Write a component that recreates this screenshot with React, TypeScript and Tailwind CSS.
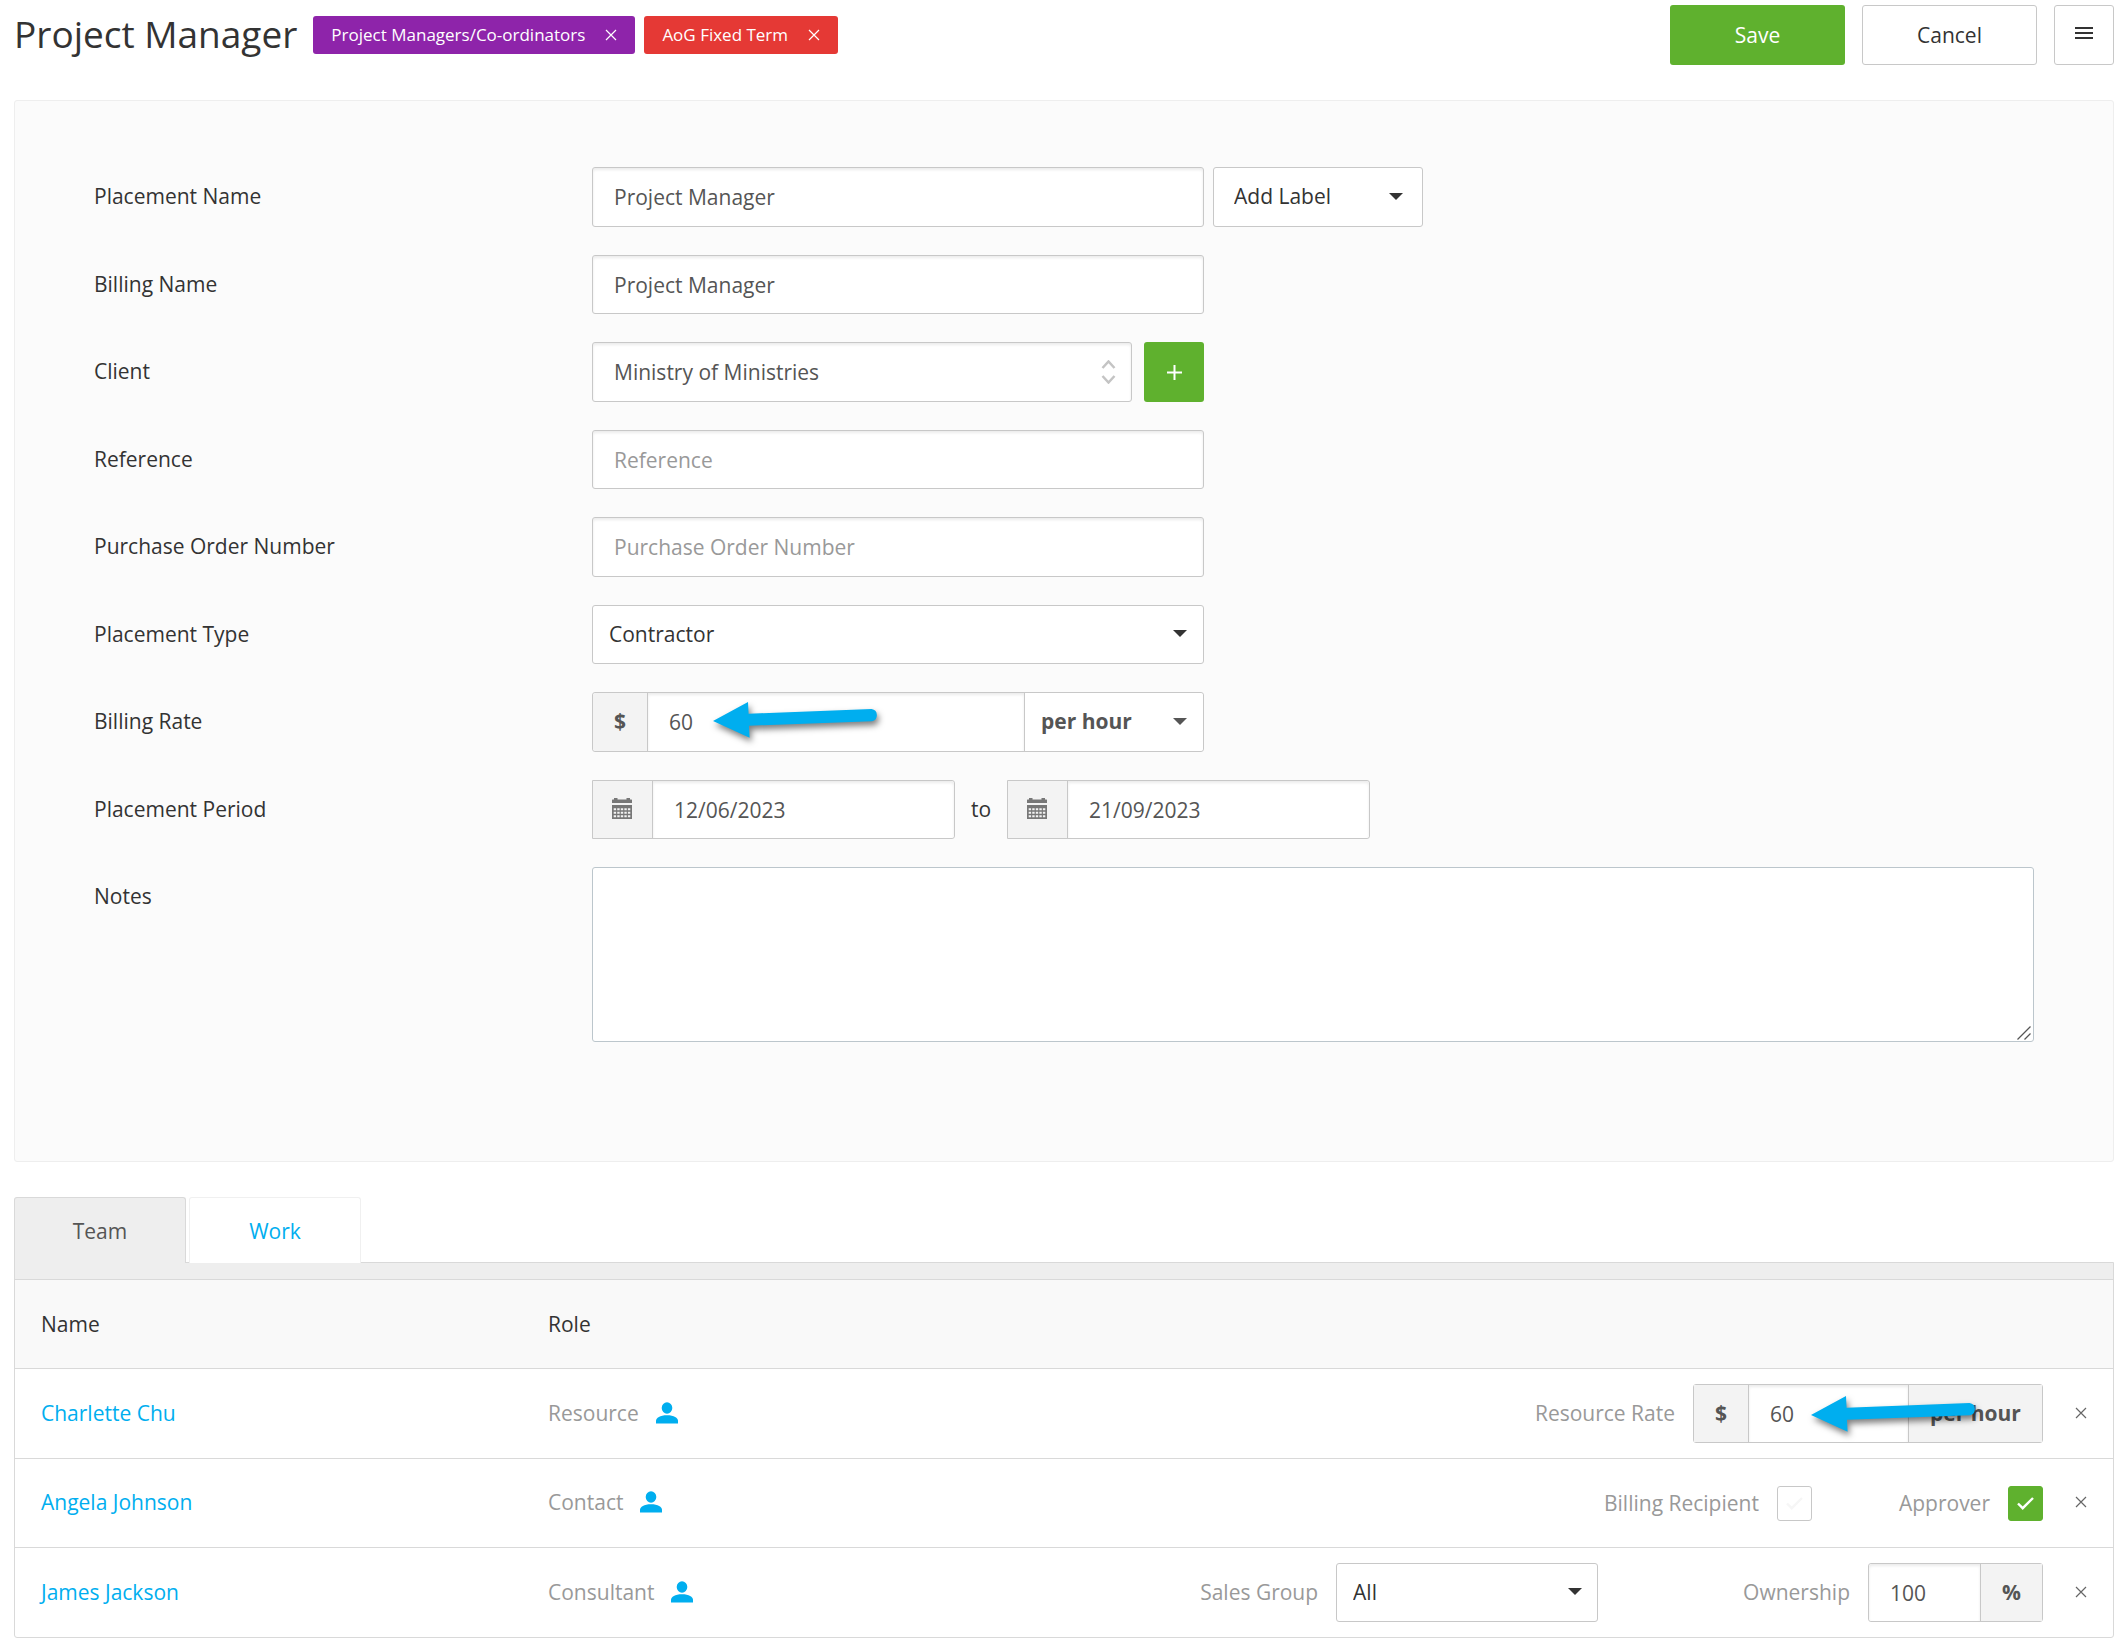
import React, { useState } from 'react'
import clsx from 'clsx'

const controlBorder = 'border border-[#c8c8c8]'
const inputShadow = 'shadow-[inset_0_2px_3px_rgba(0,0,0,0.08)]'
const inputBase = 'bg-white text-[#555] placeholder:text-[#999] outline-none'

function CloseIcon({ className }: { className?: string }) {
  return (
    <svg className={className} viewBox="0 0 12 12" fill="none" stroke="currentColor" strokeWidth="1.2" aria-hidden="true">
      <path d="M1 1l10 10M11 1L1 11" />
    </svg>
  )
}

function Caret() {
  return (
    <svg className="h-[7px] w-[14px]" viewBox="0 0 14 7" fill="currentColor" aria-hidden="true">
      <path d="M0 0h14L7 7z" />
    </svg>
  )
}

function CalendarIcon() {
  return (
    <svg className="h-[21px] w-5 text-[#777]" viewBox="0 0 20 21" fill="currentColor" aria-hidden="true">
      <path d="M2 0h3.5v1.500h9V0H18v1.500h1.500a.5.5 0 0 1 .5.5v3H0V2a.5.5 0 0 1 .5-.5H2z" />
      <path
        fillRule="evenodd"
        d="M0 7h20v14H0zM1.700 10.200v2h2.400v-2zm3.550 0v2h2.400v-2zm3.550 0v2h2.400v-2zm3.550 0v2h2.400v-2zm3.550 0v2h2.400v-2zM1.700 13.700v2h2.400v-2zm3.550 0v2h2.400v-2zm3.550 0v2h2.400v-2zm3.550 0v2h2.400v-2zm3.550 0v2h2.400v-2zM1.700 17.200v2h2.400v-2zm3.550 0v2h2.400v-2zm3.550 0v2h2.400v-2zm3.550 0v2h2.400v-2zm3.550 0v2h2.400v-2z"
      />
    </svg>
  )
}

function PersonIcon() {
  return (
    <svg className="h-[22px] w-[22px] text-[#00aeef]" viewBox="0 0 22 22" fill="currentColor" aria-hidden="true">
      <ellipse cx="11" cy="6" rx="5.300" ry="5.700" />
      <path d="M0 21.500v-2.500c0-3 4-5.700 11-5.700s11 2.700 11 5.700v2.500z" />
    </svg>
  )
}

function CheckIcon({ className }: { className?: string }) {
  return (
    <svg className={className} viewBox="0 0 17 13" fill="none" stroke="currentColor" strokeWidth="2.4" aria-hidden="true">
      <path d="M1 6.500l4.700 4.700L16 1" />
    </svg>
  )
}

// Callout pointing at the rate value
function Arrow({ className }: { className?: string }) {
  return (
    <svg
      className={clsx('pointer-events-none absolute z-10 h-[48px] w-[172px] overflow-visible', className)}
      viewBox="0 0 172 48"
      fill="#00aeef"
      aria-hidden="true"
    >
      <path
        className="drop-shadow-[2px_4px_3px_rgba(0,0,0,0.5)]"
        d="M0 21L35 2l.6 11.700L158.500 9a6.200 6.200 0 0 1 .5 12.200L36 25.700l.6 12z"
      />
    </svg>
  )
}

interface SelectProps {
  id: string
  label?: string
  options: string[]
  className?: string
  selectClassName?: string
  caretClassName?: string
}

function Select({ id, label, options, className, selectClassName, caretClassName }: SelectProps) {
  return (
    <div className={clsx('relative h-full', className)}>
      <select
        id={id}
        aria-label={label}
        className={clsx('h-full w-full appearance-none bg-white pb-0.5 outline-none', selectClassName)}
      >
        {options.map((option) => (
          <option key={option}>{option}</option>
        ))}
      </select>
      <span className={clsx('pointer-events-none absolute inset-y-0 flex items-center pb-0.5', caretClassName)}>
        <Caret />
      </span>
    </div>
  )
}

function Addon({ children, className }: { children: React.ReactNode; className?: string }) {
  return (
    <span className={clsx('flex h-full shrink-0 items-center justify-center bg-[#f3f3f3] pb-0.5 font-bold text-[#555]', className)}>
      {children}
    </span>
  )
}

function Tag({ children, className }: { children: React.ReactNode; className: string }) {
  return (
    <span
      className={clsx('flex h-[38px] items-center gap-5 rounded-[3px] px-[18px] text-[17px] font-medium text-white', className)}
    >
      {children}
      <button type="button" aria-label="Remove label">
        <CloseIcon className="h-3 w-3" />
      </button>
    </span>
  )
}

function Row({ label, htmlFor, children }: { label: string; htmlFor: string; children: React.ReactNode }) {
  return (
    <div className="flex h-[60px] items-center even:h-[59px]">
      <label htmlFor={htmlFor} className="w-[498px] shrink-0 pb-0.5 text-[#333]">
        {label}
      </label>
      {children}
    </div>
  )
}

function TextField({ id, value, placeholder }: { id: string; value?: string; placeholder?: string }) {
  return (
    <input
      id={id}
      type="text"
      defaultValue={value}
      placeholder={placeholder}
      className={clsx('h-full w-[612px] rounded-[3px] px-[21px]', controlBorder, inputShadow, inputBase)}
    />
  )
}

function DateField({ id, label, value }: { id: string; label?: string; value: string }) {
  return (
    <div className={clsx('flex h-full w-[363px] rounded-r-[3px]', controlBorder)}>
      <Addon className="w-[60px] border-r border-[#c8c8c8] pr-0.5">
        <CalendarIcon />
      </Addon>
      <input
        id={id}
        aria-label={label}
        type="text"
        defaultValue={value}
        className={clsx('min-w-0 flex-1 rounded-r-[3px] px-[21px]', inputShadow, inputBase)}
      />
    </div>
  )
}

function Checkbox({ id, label, defaultChecked }: { id: string; label: string; defaultChecked?: boolean }) {
  return (
    <div className="flex items-center gap-[18px]">
      <label htmlFor={id}>{label}</label>
      <span className="relative flex h-[35px] w-[35px] items-center justify-center">
        <input
          id={id}
          type="checkbox"
          defaultChecked={defaultChecked}
          className="peer h-full w-full appearance-none rounded-[3px] border border-[#c8c8c8] bg-white checked:border-[#5fb12e] checked:bg-[#5fb12e]"
        />
        <CheckIcon className="pointer-events-none absolute h-[13px] w-[17px] text-[#f6f6f6] peer-checked:text-white" />
      </span>
    </div>
  )
}

function TeamRow({ name, role, children }: { name: string; role: string; children: React.ReactNode }) {
  return (
    <tr className="h-[90px] even:h-[89px]">
      <td className="border-t border-[#d9d9d9] pb-0.5 pl-[26px]">
        <a href="#" className="text-[#00aeef]">
          {name}
        </a>
      </td>
      <td className="border-t border-[#d9d9d9] pb-0.5">
        <span className="flex items-center gap-[17px]">
          {role}
          <PersonIcon />
        </span>
      </td>
      <td className="border-t border-[#d9d9d9]">
        <div className="flex items-center justify-end">{children}</div>
      </td>
      <td className="border-t border-[#d9d9d9] pb-0.5 pl-8">
        <button type="button" aria-label={`Remove ${name}`} className="flex text-[#666]">
          <CloseIcon className="h-3 w-3" />
        </button>
      </td>
    </tr>
  )
}

export default function App() {
  const [tab, setTab] = useState('Team')

  return (
    <div className="bg-white px-[14px] pt-[5px] pr-[9px] pb-[7px] font-['Open_Sans',sans-serif] text-[21px] leading-7 text-[#333]">
      <header className="flex h-[60px] items-center">
        <h1 className="mr-4 pb-0.5 text-[37px] leading-[52px]">Project Manager</h1>
        <div className="flex gap-[9px]">
          <Tag className="bg-[#8e24aa]">Project Managers/Co-ordinators</Tag>
          <Tag className="bg-[#e53935]">AoG Fixed Term</Tag>
        </div>
        <div className="ml-auto flex h-full gap-[17px]">
          <button type="button" className="w-[175px] rounded-[3px] bg-[#5fb12e] text-white">
            Save
          </button>
          <button type="button" className={clsx('w-[175px] rounded-[3px] bg-white', controlBorder)}>
            Cancel
          </button>
          <button
            type="button"
            aria-label="Menu"
            className={clsx('flex w-[60px] items-center justify-center rounded-[3px] bg-white pb-1', controlBorder)}
          >
            <svg className="h-3 w-[18px]" viewBox="0 0 18 12" fill="#333" aria-hidden="true">
              <path d="M0 0h18v2H0zM0 5h18v2H0zM0 10h18v2H0z" />
            </svg>
          </button>
        </div>
      </header>

      <form className="mt-[35px] rounded-[3px] border border-[#eee] bg-[#fbfbfb] pt-[66px] pr-[79px] pb-[119px] pl-[79px]">
        <div className="flex flex-col gap-7">
          <Row label="Placement Name" htmlFor="placement-name">
            <TextField id="placement-name" value="Project Manager" />
            <Select
              id="add-label"
              label="Add Label"
              options={['Add Label']}
              className="ml-[9px] w-[210px]"
              selectClassName="rounded-[3px] border border-[#c8c8c8] pl-5"
              caretClassName="right-5"
            />
          </Row>
          <Row label="Billing Name" htmlFor="billing-name">
            <TextField id="billing-name" value="Project Manager" />
          </Row>
          <Row label="Client" htmlFor="client">
            <div className="relative h-full w-[540px]">
              <input
                id="client"
                type="text"
                role="combobox"
                aria-expanded="false"
                defaultValue="Ministry of Ministries"
                className={clsx('h-full w-full rounded-[3px] px-[21px]', controlBorder, inputShadow, inputBase)}
              />
              <span className="pointer-events-none absolute inset-y-0 right-4 flex items-center text-[#c4c4c4]">
                <svg className="h-6 w-[15px]" viewBox="0 0 15 24" fill="none" stroke="currentColor" strokeWidth="2.500" aria-hidden="true">
                  <path d="M1.500 8l6-6.500 6 6.500M1.500 16l6 6.500 6-6.500" />
                </svg>
              </span>
            </div>
            <button
              type="button"
              aria-label="Add client"
              className="ml-3 flex h-full w-[60px] items-center justify-center rounded-[3px] bg-[#5fb12e] text-white"
            >
              <svg className="h-[15px] w-[15px]" viewBox="0 0 15 15" fill="currentColor" aria-hidden="true">
                <path d="M6.500 0h2v6.500H15v2H8.500V15h-2V8.500H0v-2h6.500z" />
              </svg>
            </button>
          </Row>
          <Row label="Reference" htmlFor="reference">
            <TextField id="reference" placeholder="Reference" />
          </Row>
          <Row label="Purchase Order Number" htmlFor="purchase-order">
            <TextField id="purchase-order" placeholder="Purchase Order Number" />
          </Row>
          <Row label="Placement Type" htmlFor="placement-type">
            <Select
              id="placement-type"
              options={['Contractor', 'Permanent']}
              className="w-[612px]"
              selectClassName="rounded-[3px] border border-[#c8c8c8] pl-4"
              caretClassName="right-[17px]"
            />
          </Row>
          <Row label="Billing Rate" htmlFor="billing-rate">
            <div className={clsx('relative flex h-full w-[612px] rounded-[3px]', controlBorder)}>
              <Addon className="w-[55px] rounded-l-[3px] border-r border-[#c8c8c8]">$</Addon>
              <input
                id="billing-rate"
                type="text"
                defaultValue="60"
                className={clsx('min-w-0 flex-1 px-[21px]', inputShadow, inputBase)}
              />
              <Select
                id="billing-unit"
                label="Billing unit"
                options={['per hour', 'per day']}
                className="w-[179px] border-l border-[#c8c8c8] text-[#555]"
                selectClassName="rounded-r-[3px] pl-4 font-bold"
                caretClassName="right-4"
              />
              <Arrow className="top-[7px] left-[120px]" />
            </div>
          </Row>
          <Row label="Placement Period" htmlFor="period-start">
            <DateField id="period-start" value="12/06/2023" />
            <span className="w-[52px] pb-0.5 text-center">to</span>
            <DateField id="period-end" label="Period end" value="21/09/2023" />
          </Row>
          <div className="flex">
            <label htmlFor="notes" className="w-[498px] shrink-0 pt-[15px]">
              Notes
            </label>
            <div className="relative flex flex-1">
              <textarea
                id="notes"
                className="h-[175px] flex-1 resize-none rounded-[3px] border border-[#bcc6cc] bg-white p-5 outline-none"
              />
              <svg
                className="pointer-events-none absolute right-[3px] bottom-0.5 h-3.5 w-3.5"
                viewBox="0 0 14 14"
                fill="none"
                stroke="#555"
                strokeWidth="1.3"
                aria-hidden="true"
              >
                <path d="M.5 13.500l13-13M7.500 13.500l6-6" />
              </svg>
            </div>
          </div>
        </div>
      </form>

      <section className="mt-[35px]">
        <div role="tablist" className="relative -mb-px flex gap-[3px]">
          {['Team', 'Work'].map((name) => (
            <button
              key={name}
              type="button"
              role="tab"
              aria-selected={tab === name}
              onClick={() => setTab(name)}
              className={clsx(
                'h-[66px] w-[172px] rounded-t-[3px] border border-b-0',
                tab === name ? 'border-[#d9d9d9] bg-[#eee] text-[#555]' : 'border-[#f0f0f0] bg-white text-[#00aeef]'
              )}
            >
              {name}
            </button>
          ))}
        </div>
        <div className="rounded-b-[3px] border border-[#d9d9d9]">
          <div className="h-4 bg-[#eee]" />
          <table className="w-full table-fixed border-separate border-spacing-0 text-left text-[#999]">
            <colgroup>
              <col className="w-[533px]" />
              <col className="w-[500px]" />
              <col />
              <col className="w-[70px]" />
            </colgroup>
            <thead>
              <tr className="h-[89px] bg-[#f9f9f9] text-[#333]">
                <th className="border-t border-[#d9d9d9] pl-[26px] font-normal">Name</th>
                <th className="border-t border-[#d9d9d9] font-normal">Role</th>
                <th className="border-t border-[#d9d9d9]" />
                <th className="border-t border-[#d9d9d9]" />
              </tr>
            </thead>
            <tbody>
              <TeamRow name="Charlette Chu" role="Resource">
                <label htmlFor="resource-rate" className="mr-[18px] pb-0.5">
                  Resource Rate
                </label>
                <div className={clsx('relative flex h-[59px] w-[350px] rounded-[3px]', controlBorder)}>
                  <Addon className="w-[55px] border-r border-[#c8c8c8]">$</Addon>
                  <input
                    id="resource-rate"
                    type="text"
                    defaultValue="60"
                    className={clsx('min-w-0 flex-1 px-[21px]', inputShadow, inputBase)}
                  />
                  <Addon className="w-[134px] border-l border-[#c8c8c8]">per hour</Addon>
                  <Arrow className="top-[9px] left-[117px]" />
                </div>
              </TeamRow>
              <TeamRow name="Angela Johnson" role="Contact">
                <div className="flex gap-[87px]">
                  <Checkbox id="billing-recipient" label="Billing Recipient" />
                  <Checkbox id="approver" label="Approver" defaultChecked />
                </div>
              </TeamRow>
              <TeamRow name="James Jackson" role="Consultant">
                <label htmlFor="sales-group" className="mr-[18px] pb-0.5">
                  Sales Group
                </label>
                <div className="h-[59px] text-[#333]">
                  <Select
                    id="sales-group"
                    options={['All']}
                    className="w-[262px]"
                    selectClassName="rounded-[3px] border border-[#c8c8c8] pl-4"
                    caretClassName="right-4"
                  />
                </div>
                <label htmlFor="ownership" className="mr-[18px] ml-[145px] pb-0.5">
                  Ownership
                </label>
                <div className={clsx('flex h-[59px] w-[175px] rounded-[3px]', controlBorder)}>
                  <input
                    id="ownership"
                    type="text"
                    defaultValue="100"
                    className={clsx('min-w-0 flex-1 rounded-l-[3px] pl-[21px]', inputShadow, inputBase)}
                  />
                  <Addon className="w-[62px] border-l border-[#c8c8c8]">%</Addon>
                </div>
              </TeamRow>
            </tbody>
          </table>
        </div>
      </section>
    </div>
  )
}
